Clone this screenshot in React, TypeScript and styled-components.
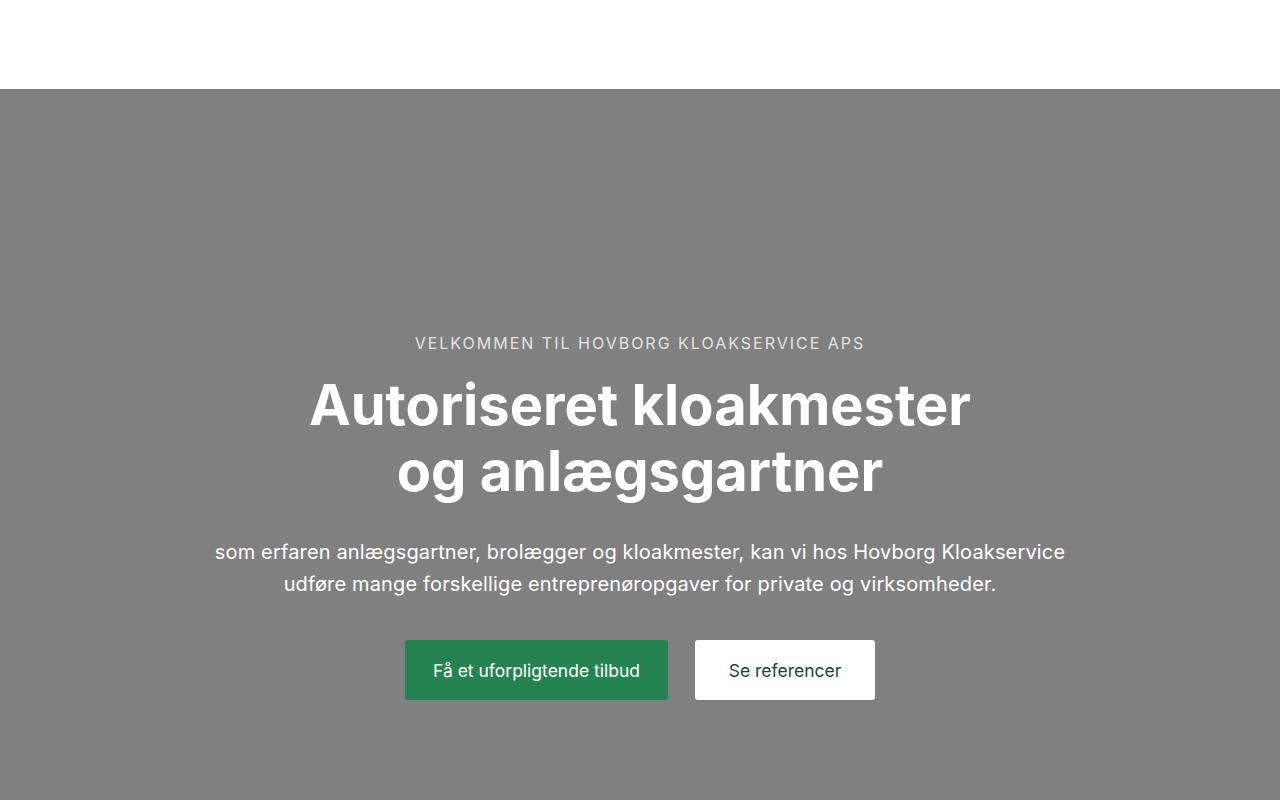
import React from "react";
import styled, { createGlobalStyle } from "styled-components";

const Global = createGlobalStyle`
  html, body { margin: 0; padding: 0; }
  body { font-family: Inter, "Noto Sans", sans-serif; background: #fff; }
  * { box-sizing: border-box; }
`;

const Header = styled.header`
  height: 89px;
  background: #ffffff;
`;

const Hero = styled.section`
  background: #808080;
  min-height: 711px;
  padding: 242px 24px 100px;
  display: flex;
  flex-direction: column;
  align-items: center;
  text-align: center;
`;

const Eyebrow = styled.p`
  margin: 0;
  font-size: 16px;
  line-height: 24px;
  letter-spacing: 2px;
  text-transform: uppercase;
  color: #e2e2e2;
  font-weight: 400;
`;

const Title = styled.h1`
  margin: 17px 0 0;
  font-size: 56px;
  line-height: 66px;
  font-weight: 700;
  color: #ffffff;
  letter-spacing: 0;
`;

const Lead = styled.p`
  margin: 32px 0 0;
  max-width: 900px;
  font-size: 20px;
  line-height: 32px;
  letter-spacing: 0.15px;
  color: #ffffff;
`;

const Actions = styled.div`
  margin-top: 40px;
  display: flex;
  gap: 27px;
`;

const Button = styled.a<{ $variant: "primary" | "secondary" }>`
  display: inline-flex;
  align-items: center;
  justify-content: center;
  height: 60px;
  border-radius: 3px;
  font-size: 17.5px;
  text-decoration: none;
  background: ${(p) => (p.$variant === "primary" ? "#258352" : "#ffffff")};
  color: ${(p) => (p.$variant === "primary" ? "#ffffff" : "#164a33")};
  width: ${(p) => (p.$variant === "primary" ? "263px" : "180px")};
`;

export default function App() {
  return (
    <>
      <Global />
      <Header />
      <Hero>
        <Eyebrow>Velkommen til Hovborg Kloakservice ApS</Eyebrow>
        <Title>
          Autoriseret kloakmester
          <br />
          og anlægsgartner
        </Title>
        <Lead>
          som erfaren anlægsgartner, brolægger og kloakmester, kan vi hos Hovborg Kloakservice
          udføre mange forskellige entreprenøropgaver for private og virksomheder.
        </Lead>
        <Actions>
          <Button href="#" $variant="primary">Få et uforpligtende tilbud</Button>
          <Button href="#" $variant="secondary">Se referencer</Button>
        </Actions>
      </Hero>
    </>
  );
}
